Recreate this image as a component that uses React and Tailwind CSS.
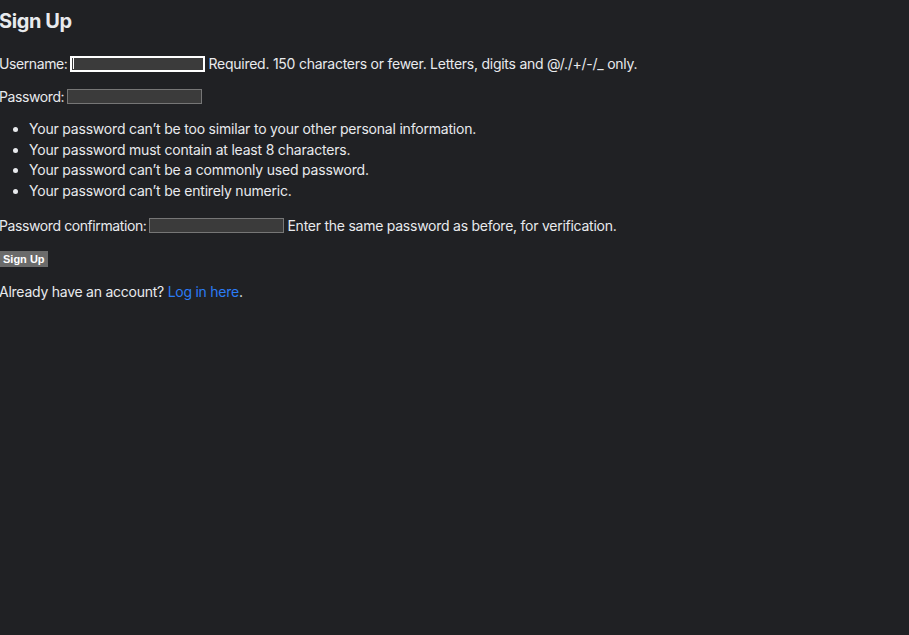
import React from 'react';

const font = { fontFamily: 'Inter, "Open Sans", sans-serif' };

function Field({ focused }) {
  if (focused) {
    return (
      <span className="flex h-[16px] w-[135px] items-center border-2 border-white bg-[#3b3b3b] pl-[1px]">
        <span className="h-[11px] w-[1px] bg-white" />
      </span>
    );
  }
  return <span className="block h-[15px] w-[135px] border border-[#767676] bg-[#3b3b3b]" />;
}

export default function App() {
  const rules = [
    'Your password can’t be too similar to your other personal information.',
    'Your password must contain at least 8 characters.',
    'Your password can’t be a commonly used password.',
    'Your password can’t be entirely numeric.',
  ];

  return (
    <div className="min-h-screen bg-[#202124] text-[14px] tracking-[-0.25px] text-[#e8eaed]" style={font}>
      <div className="-ml-[1px] pt-[5px]">
        <h2 className="text-[20px] font-bold leading-[32px] tracking-[-0.4px]">Sign Up</h2>

        <div className="mt-[16px] flex h-[21px] items-center gap-[3px] whitespace-nowrap">
          <span className="tracking-[-0.4px]">Username:</span>
          <Field focused />
          <span>Required. 150 characters or fewer. Letters, digits and @/./+/-/_ only.</span>
        </div>

        <div className="mt-[12px] flex h-[21px] items-center gap-[3px]">
          <span className="tracking-[-0.4px]">Password:</span>
          <Field />
        </div>

        <ul className="mt-[12px] list-disc pl-[30px] leading-[20.5px] tracking-[-0.2px]">
          {rules.map((r) => (
            <li key={r}>{r}</li>
          ))}
        </ul>

        <div className="mt-[14px] flex h-[21px] items-center gap-[3px] whitespace-nowrap">
          <span className="tracking-[-0.4px]">Password confirmation:</span>
          <Field />
          <span>Enter the same password as before, for verification.</span>
        </div>

        <div className="mt-[12px] flex h-[21px] items-center">
          <button
            type="submit"
            className="ml-[1px] h-[16px] bg-[#6b6b6b] px-[3px] text-[11px] font-bold leading-[16px] tracking-normal text-white"
            style={{ fontFamily: '"Liberation Sans", Arial, sans-serif' }}
          >
            Sign Up
          </button>
        </div>

        <p className="mt-[12px] leading-[21px]">
          Already have an account? <a href="#" className="text-[#2b7cf6]">Log in here</a>.
        </p>
      </div>
    </div>
  );
}
